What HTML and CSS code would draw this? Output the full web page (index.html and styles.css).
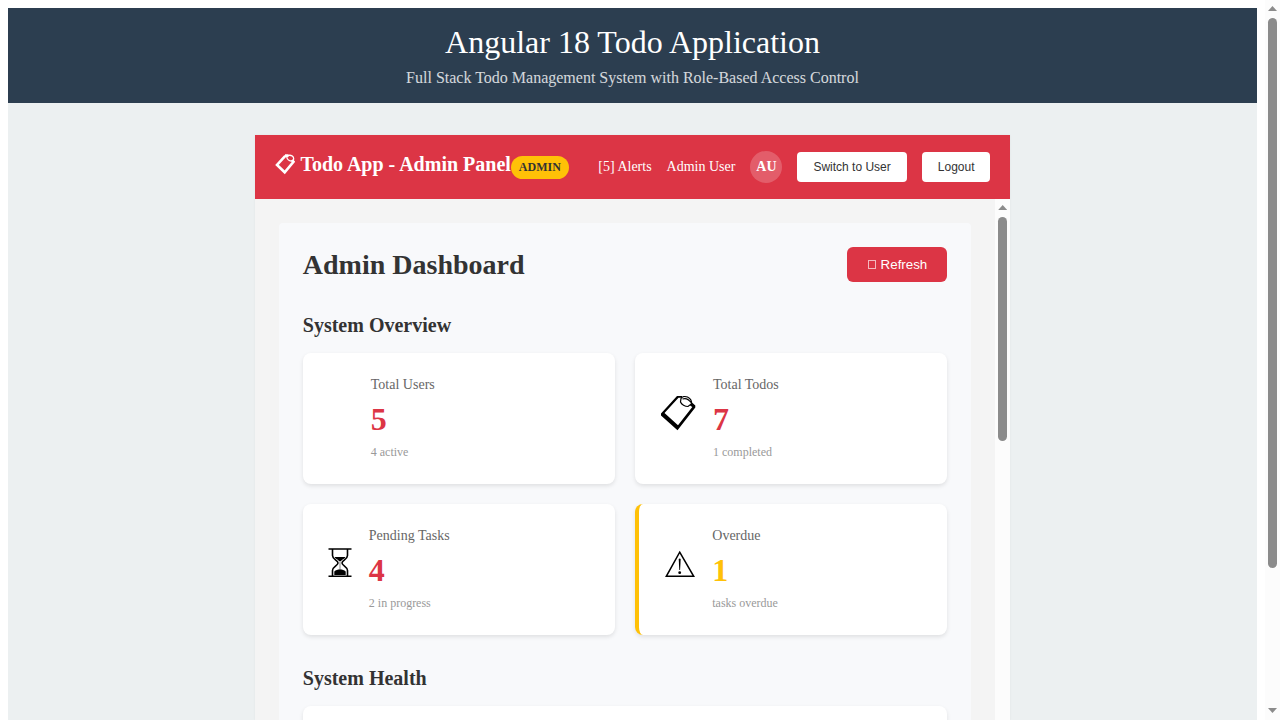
FILE: index.html
```html
<!DOCTYPE html>
<html lang="en">
<head>
<meta charset="utf-8">
<title>Angular 18 Todo Application</title>
<link rel="stylesheet" href="styles.css">
</head>
<body>
<div class="window">
<div class="page">
  <header class="page-header">
    <h1>Angular 18 Todo Application</h1>
    <p>Full Stack Todo Management System with Role-Based Access Control</p>
  </header>
  <main class="page-main">
    <div class="app">
      <nav class="navbar">
        <div class="brand"><h2><svg class="brand-icon" viewBox="0 0 20 21"><path fill="none" stroke="currentColor" stroke-width="2.600" d="M10.300 1.800L2 11L9.700 18.300L18.500 7.800L17 6M10 1.600h3.500"/><path fill="none" stroke="currentColor" stroke-width="1.300" d="M11.800 3C12 1.300 15 .8 17 1.800C19.500 3.500 19 6.500 17 7C14.500 7 12 5.500 11.800 3z"/></svg>Todo App - Admin Panel</h2><span class="badge">ADMIN</span></div>
        <div class="nav-right">
          <span>[5] Alerts</span>
          <span>Admin User</span>
          <span class="avatar">AU</span>
          <button class="nav-btn">Switch to User</button>
          <button class="nav-btn">Logout</button>
        </div>
      </nav>
      <div class="app-body">
        <div class="content">
          <div class="dashboard">
            <div class="dash-head">
              <h1>Admin Dashboard</h1>
              <button class="refresh"><span class="refresh-box"></span>Refresh</button>
            </div>
            <section>
              <h2>System Overview</h2>
              <div class="stats">
                <div class="card"><div class="icon users"></div><div><h3>Total Users</h3><p class="num">5</p><small>4 active</small></div></div>
                <div class="card">
                  <svg class="icon todos" viewBox="0 0 38 38">
                    <path fill="currentColor" d="M18 2h5v1.800h-3.500L5.500 19L19 31.200L33.300 13L31 11.500L33 8.500L36.300 11.500V13.500L18.500 36.200L2 21.500V19.500z"/>
                    <path fill="none" stroke="currentColor" stroke-width="1.200" d="M22 4.500C23 2.500 26 2 28.500 3C31.500 4.500 33 7 32.300 10L29 12.500C26 12.500 22.500 10.500 21.500 8zM23.500 5C26 4 29.500 5 32 8.500"/>
                  </svg>
                  <div><h3>Total Todos</h3><p class="num">7</p><small>1 completed</small></div></div>
                <div class="card">
                  <svg class="icon pending" viewBox="0 0 26 30">
                    <path fill="none" stroke="currentColor" stroke-width="1.600" d="M1.500 1h23M1.500 28.200h23M5.500 1.500v6c0 4 5.500 5 5.500 7.500s-5.500 3.500-5.500 7.500v5.500M20.500 1.500v6c0 4-5.500 5-5.500 7.500s5.500 3.500 5.500 7.500v5.500"/>
                    <path fill="currentColor" d="M7.500 9h11c-.8 2-3 2-4.500 4h-2c-1.500-2-3.700-2-4.500-4zM7.300 27v-3.500c1.500-1.500 3.500-2 5.700-2s4.200.5 5.700 2v3.500z"/>
                    <path stroke="currentColor" stroke-width=".5" d="M13 12v10"/>
                  </svg>
                  <div><h3>Pending Tasks</h3><p class="num">4</p><small>2 in progress</small></div></div>
                <div class="card warning">
                  <svg class="icon overdue" viewBox="0 0 33.300 28">
                    <path fill="none" stroke="currentColor" stroke-width="1.500" d="M16.700 2.200L30.700 26.300H3.300z"/>
                    <path fill="currentColor" d="M15.700 9q1-1 2 0l-.6 11h-.8z"/><circle cx="16.700" cy="22.700" r="1.400" fill="currentColor"/>
                  </svg>
                  <div><h3>Overdue</h3><p class="num">1</p><small>tasks overdue</small></div></div>
              </div>
            </section>
            <section>
              <h2>System Health</h2>
              <div class="card health"></div>
            </section>
          </div>
        </div>
        <div class="scrollbar inner"><i class="up"></i><b class="thumb"></b></div>
      </div>
    </div>
  </main>
</div>
<div class="scrollbar outer"><i class="up"></i><b class="thumb"></b><i class="down"></i></div>
</div>
</body>
</html>
```
FILE: styles.css
```css
body { margin: 0; font-family: "Liberation Serif", "Times New Roman", serif; }
h1, h2, h3, p { margin: 0; }
.window { display: flex; height: 720px; overflow: hidden; background: #fff; }
.page { flex: 1; margin: 8px 8px 0; background: #ecf0f1; height: 712px; overflow: hidden; }
.page-header { background: #2c3e50; color: #fff; text-align: center; padding: 16px; }
.page-header h1 { font-size: 32px; font-weight: 400; line-height: 37px; margin-bottom: 8px; }
.page-header p { font-size: 16px; line-height: 18px; opacity: .8; }
.page-main { padding: 32px; }
.app { width: 755.4px; height: 585px; margin: 0 auto; display: flex; flex-direction: column; background: #f4f4f4; box-shadow: 0 0 2px rgba(0,0,0,.06); }
.navbar { height: 64px; flex: none; box-sizing: border-box; padding: 0 20px; background: #dc3545; color: #fff; display: flex; justify-content: space-between; align-items: center; }
.brand { display: flex; align-items: center; }
.brand h2 { display: flex; align-items: center; gap: 5.600px; font-size: 20px; line-height: 23px; padding-bottom: 5px; }
.brand-icon { width: 20px; height: 21px; }
.badge { background: #ffc107; color: #333; font-size: 12px; font-weight: 700; line-height: 15px; padding: 4px 8px; border-radius: 12px; }
.nav-right { display: flex; align-items: center; gap: 15px; font-size: 14px; margin-right: -.3px; }
.avatar { width: 32px; height: 32px; border-radius: 50%; background: rgba(255,255,255,.2); display: flex; align-items: center; justify-content: center; font-weight: 700; }
.nav-btn { height: 30px; padding: 0 16px; border: 0; border-radius: 4px; background: #fff; color: #333; font: 12px "Liberation Sans", Arial, sans-serif; }
.app-body { flex: 1; min-height: 0; display: flex; }
.content { flex: 1; padding: 24px 24px 0; overflow: hidden; }
.dashboard { padding: 24px; background: #f8f9fb; border-radius: 4px; }
.dash-head { display: flex; justify-content: space-between; align-items: center; margin-bottom: 32px; }
.dash-head h1 { font-size: 28px; line-height: 32px; color: #333; }
.refresh { width: 100px; height: 35px; padding: 0 0 0 1px; display: flex; align-items: center; justify-content: center; gap: 4.500px; border: 0; border-radius: 6px; background: #dc3545; color: #fff; font: 13.333px "Liberation Sans", Arial, sans-serif; }
.refresh-box { width: 8px; height: 9px; box-sizing: border-box; border: 1px solid rgba(255,255,255,.65); }
section { margin-bottom: 32px; }
section h2 { font-size: 20px; line-height: 23px; color: #333; margin-bottom: 16px; }
.stats { display: grid; grid-template-columns: 1fr 1fr; gap: 20px; }
.card { height: 131px; box-sizing: border-box; padding: 23px 24px 25px; background: #fff; border-radius: 8px; box-shadow: 0 2px 4px rgba(0,0,0,.1); display: flex; align-items: center; gap: 16px; }
.warning { border-left: 4px solid #ffc107; }
.icon { flex: none; color: #000; }
.users { width: 28px; height: 28px; }
.todos { width: 38px; height: 38px; margin-bottom: 9px; }
.pending { width: 26px; height: 30px; margin-bottom: 11px; }
.overdue { width: 33.300px; height: 28px; margin-bottom: 10px; }
.card h3 { font-size: 14px; font-weight: 400; line-height: 16px; color: #666; margin-bottom: 8px; }
.num { font-size: 32px; font-weight: 700; line-height: 36px; color: #dc3545; margin-bottom: 8px; }
.warning .num { color: #ffc107; }
.card small { display: block; font-size: 12px; line-height: 14px; color: #999; }
.health { height: 200px; }
.scrollbar { width: 15px; flex: none; box-sizing: border-box; padding: 6px 0 7px; background: #fcfcfc; display: flex; flex-direction: column; align-items: center; }
.scrollbar i { width: 9px; height: 5px; background: #8b8b8b; }
.up { clip-path: polygon(50% 0, 100% 100%, 0 100%); }
.down { clip-path: polygon(0 0, 100% 0, 50% 100%); margin-top: auto; }
.thumb { width: 9px; margin-top: 7px; border-radius: 5px; background: #8b8b8b; }
.inner .thumb { height: 224px; }
.outer .thumb { height: 550px; }
```
